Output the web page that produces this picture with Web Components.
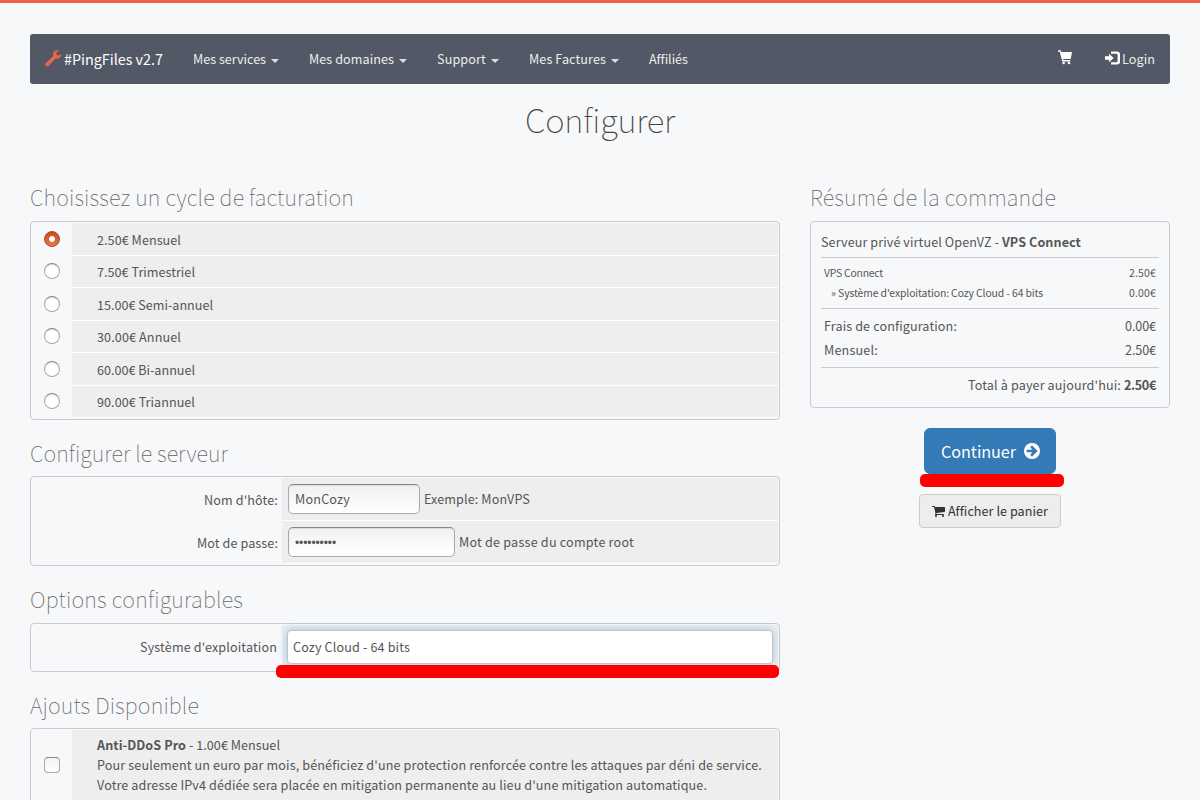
<!DOCTYPE html>
<html lang="fr">
<head>
<meta charset="utf-8">
<title>#PingFiles - Configurer</title>
<style>
html,body{margin:0;height:800px;overflow:hidden}
body{background:#f7f8fa;color:#555;font:12.6px/20px "Noto Sans CJK SC","Source Sans Pro",sans-serif}
</style>
</head>
<body>
<pf-app></pf-app>
<script>
const make = (name, html, setup) => customElements.define(name, class extends HTMLElement {
  connectedCallback() {
    if (this.shadowRoot) return;
    this.attachShadow({mode: 'open'}).innerHTML = html;
    if (setup) setup(this, this.shadowRoot);
  }
});

/* Single-line label whose tracking is adjusted to fill the width w */
make('pf-label', `<style>:host{display:inline-block;white-space:nowrap;vertical-align:top}</style><slot></slot>`, el => {
  const w = parseFloat(el.getAttribute('w'));
  const n = el.textContent.length;
  if (!w) return;
  const now = el.getBoundingClientRect().width;
  el.style.letterSpacing = ((w - now) / n).toFixed(3) + 'px';
  el.style.width = w + 'px';
});

const ICONS = {
  wrench: ['0 0 17 17', '<path d="M16.5 4.2 13.7 5.6 11.6 4.7 11.2 2.6 14 .7C11.6-.2 8.8.8 8.2 3.2 7.9 4.4 8.1 5.2 8.3 5.9L.9 12.900C-.1 13.900.1 15.200.8 15.900 1.600 16.700 2.900 16.800 3.800 15.800L10.400 8.600C12.800 9.500 16.200 7.800 16.500 4.200Z"/>'],
  cart: ['0 0 14 15', '<path d="M0 .2h2.500l.8 1.900H14l-1.300 7H5.100l.3 1h6.900v1.400H4.300L1.700 1.700H0Z"/><circle cx="5.600" cy="13" r="1.300"/><circle cx="11" cy="13" r="1.300"/>'],
  login: ['0 0 15 14', '<path d="M0 5.200h4V2.700L8.700 7 4 11.300V8.800H0Z"/><path d="M6 .5h6A3 3 0 0 1 15 3.500v7a3 3 0 0 1-3 3H6v-2.300h5.400q1.200 0 1.200-1.200V4q0-1.200-1.200-1.200H6Z"/>'],
  arrow: ['128 128 1536 1536', '<path d="M1413 896q0-27-18-45l-362-362-91-91q-18-18-45-18t-45 18l-91 91q-18 18-18 45t18 45l189 189h-502q-26 0-45 19t-19 45v128q0 26 19 45t45 19h502l-189 189q-19 19-19 45t19 45l91 91q18 18 45 18t45-18l91-91 362-362q18-18 18-45zm251 0q0 209-103 385.500t-279.500 279.500-385.500 103-385.500-103-279.500-279.500-103-385.500 103-385.500 279.500-279.500 385.500-103 385.500 103 279.500 279.500 103 385.500z"/>'],
  basket: ['64 256 1664 1408', '<path d="M704 1536q0 52-38 90t-90 38-90-38-38-90 38-90 90-38 90 38 38 90zm896 0q0 52-38 90t-90 38-90-38-38-90 38-90 90-38 90 38 38 90zm128-1088v512q0 24-16.500 42.500t-40.500 21.500l-1044 122q13 60 13 70 0 16-24 64h920q26 0 45 19t19 45-19 45-45 19h-1024q-26 0-45-19t-19-45q0-11 8-31.500t16-36 21.500-40 15.500-29.500l-177-823h-204q-26 0-45-19t-19-45 19-45 45-19h256q16 0 28.500 6.500t19.500 15.500 13 24.500 8 26 5.500 29.500 4.500 26h1201q26 0 45 19t19 45z"/>']
};
make('pf-icon', `<style>:host{display:block;flex:none}svg{display:block;width:100%;height:100%;fill:currentColor}</style><svg></svg>`, (el, root) => {
  const [box, body] = ICONS[el.getAttribute('name')];
  const svg = root.querySelector('svg');
  svg.setAttribute('viewBox', box);
  svg.innerHTML = body;
});

make('pf-nav-item', `<style>
:host{display:flex;align-items:center;height:20px;color:#eee}
i{width:0;height:0;margin-left:5px;margin-top:3px;border:4px solid transparent;border-top-color:#ddd;border-bottom:0}
:host([plain]) i{display:none}
</style><slot></slot><i></i>`);

make('pf-navbar', `<style>
:host{display:flex;box-sizing:border-box;height:50px;padding:0 15px;background:#535866;border-radius:3px;color:#eee;align-items:center}
.brand{display:flex;align-items:center;font-size:14.400px;color:#fff;margin-right:30px}
.brand pf-icon{width:17px;height:17px;color:#e8654a;margin:-2px 2px 0 0}
nav{display:flex;gap:30px;flex:1}
.cart{width:14px;height:15px;margin:-3px 33px 0 0;color:#fff}
.in{width:15px;height:14px;margin:-2px 2px 0 0;color:#fff}
</style>
<div class="brand"><pf-icon name="wrench"></pf-icon><pf-label w="99">#PingFiles v2.7</pf-label></div>
<nav>
<pf-nav-item><pf-label w="73">Mes services</pf-label></pf-nav-item>
<pf-nav-item><pf-label w="85">Mes domaines</pf-label></pf-nav-item>
<pf-nav-item><pf-label w="49">Support</pf-label></pf-nav-item>
<pf-nav-item><pf-label w="77">Mes Factures</pf-label></pf-nav-item>
<pf-nav-item plain><pf-label w="39">Affiliés</pf-label></pf-nav-item>
</nav>
<pf-icon class="cart" name="cart"></pf-icon><pf-icon class="in" name="login"></pf-icon><pf-label w="33">Login</pf-label>`);

make('pf-heading', `<style>
:host{display:block;height:30px;line-height:30px;font-size:21.700px;font-weight:100;color:#666}
:host([big]){font-size:33px;height:44px;line-height:44px;text-align:center;color:#444}
</style><slot></slot>`);

make('pf-panel', `<style>
:host{display:block;box-sizing:border-box;border:1px solid #c9cbce;border-radius:4px;padding:1px}
</style><slot></slot>`);

make('pf-choice', `<style>
:host{display:grid;grid-template-columns:40px 1fr;height:32px}
:host([tall]){height:33px}
.mark{display:flex;justify-content:center;padding-top:7px}
b{box-sizing:border-box;width:16px;height:16px;border-radius:50%;border:1px solid #aaa;border-top-color:#888;background:#fff;box-shadow:inset 0 1px 1px #ddd}
:host([on]) b{border:1px solid #b04a1c;background:radial-gradient(circle,#fff 0 2.500px,transparent 3.300px),linear-gradient(#c44c1a,#e67a4c);box-shadow:none}
.body{background:#eee;border-bottom:1px solid #fff;padding:6px 0 0 25px}
:host([tall]) .mark{padding-top:8px}
:host([tall]) .body{padding-top:7px}
</style><div class="mark"><b></b></div><div class="body"><slot></slot></div>`);

make('pf-addon', `<style>
:host{display:grid;grid-template-columns:40px 1fr;height:100px}
.mark{display:flex;justify-content:center;padding-top:27px}
i{box-sizing:border-box;width:16px;height:16px;border-radius:4px;border:1px solid #aaa;border-top-color:#888;background:linear-gradient(#f4f4f4,#fff)}
.body{background:#eee;padding:5px 0 0 25px;display:flex;flex-direction:column;align-items:flex-start}
</style><div class="mark"><i></i></div><div class="body"><slot></slot></div>`);

make('pf-field', `<style>
:host{display:grid;grid-template-columns:250px 1fr;height:43px}
.name{display:flex;justify-content:flex-end;padding:12px 4px 0 0}
.body{box-sizing:border-box;background:#eee;border-bottom:1px solid #fff;display:flex;padding:6px 0 0 6px}
:host([single]){height:45px}
:host([single]) .name{padding-right:5px}
:host([single]) .body{padding:5px 0 0 5px;border:0}
</style><div class="name"><slot name="name"></slot></div><div class="body"><slot></slot></div>`);

make('pf-input', `<style>
:host{display:block;box-sizing:border-box;height:30px;margin-right:4px;padding:4px 6px;border:1px solid #aaa;border-top-color:#888;border-radius:5px;background:linear-gradient(#f1f1f1,#fff);box-shadow:inset 0 1px 1px #ddd}
:host([secret]){font-family:"Liberation Sans",sans-serif;font-size:12px;padding-top:5px}
:host([focus]){height:34px;width:486px;padding:6px 5px;border-color:#bbc4cc;border-radius:4px;background:#fff;box-shadow:0 0 8px rgba(102,165,215,.6)}
</style><slot></slot>`);

make('pf-line', `<style>
:host{display:flex;justify-content:space-between;padding:0 3px;height:20px}
</style><slot></slot>`);

make('pf-summary', `<style>
:host{display:block}
pf-panel{height:187px;padding:10px 10px 0}
section{border-bottom:1px solid #c9cbce;box-sizing:border-box}
.title{height:26px}
.title b{margin-left:3px}
.items{height:51px;padding-top:5px;font-size:10.400px}
.items pf-line+pf-line{padding-left:10px}
.fees{height:59px;padding-top:7px}
.fees pf-line{height:24px}
.total{display:flex;justify-content:flex-end;gap:3px;padding:7px 3px 0 0}
</style>
<pf-panel>
<section class="title"><pf-label w="178">Serveur privé virtuel OpenVZ -</pf-label><b><pf-label w="79">VPS Connect</pf-label></b></section>
<section class="items">
<pf-line><pf-label w="59">VPS Connect</pf-label><pf-label w="27">2.50€</pf-label></pf-line>
<pf-line><pf-label w="212">» Système d'exploitation: Cozy Cloud - 64 bits</pf-label><pf-label w="27">0.00€</pf-label></pf-line>
</section>
<section class="fees">
<pf-line><pf-label w="133">Frais de configuration:</pf-label><pf-label w="31">0.00€</pf-label></pf-line>
<pf-line><pf-label w="54">Mensuel:</pf-label><pf-label w="31">2.50€</pf-label></pf-line>
</section>
<div class="total"><pf-label w="153">Total à payer aujourd'hui:</pf-label><b><pf-label w="32">2.50€</pf-label></b></div>
</pf-panel>`);

make('pf-button', `<style>
:host{display:flex;box-sizing:border-box;width:142px;height:34px;align-items:center;padding-left:12px;gap:3px;border:1px solid #ccc;border-radius:4px;background:#ededed;color:#333}
:host([primary]){width:132px;height:46px;padding-left:16px;gap:8px;border-color:#337ab7;border-radius:6px;background:#337ab7;color:#fff;font-size:16.200px}
</style><slot></slot>`);

make('pf-marker', `<style>
:host{position:absolute;height:13px;border-radius:5px;background:#f00;z-index:2}
</style>`);

make('pf-app', `<style>
:host{display:block;box-sizing:border-box;height:800px;overflow:hidden;border-top:3px solid #e8654a;padding:31px 30px 0}
.title{margin-top:13px}
main{display:grid;grid-template-columns:750px 360px;column-gap:30px;margin-top:41px}
pf-heading{margin-bottom:8px}
.first{margin-bottom:9px}
.gap1{margin-top:18px}.gap2{margin-top:18px;margin-bottom:9px}.gap3{margin-top:18px}
.wrap{position:relative}
.wrap pf-marker{left:246px;top:42px;width:503px}
.actions{display:flex;flex-direction:column;align-items:center;gap:20px;margin-top:20px;position:relative}
.actions pf-marker{left:110px;top:46px;width:144px}
.arrow{width:16px;height:16px}.basket{width:13px;height:11px}
</style>
<pf-navbar></pf-navbar>
<pf-heading class="title" big><pf-label w="150">Configurer</pf-label></pf-heading>
<main>
<div>
<pf-heading class="first"><pf-label w="324">Choisissez un cycle de facturation</pf-label></pf-heading>
<pf-panel>
<pf-choice tall on><pf-label w="84">2.50€ Mensuel</pf-label></pf-choice>
<pf-choice><pf-label w="98">7.50€ Trimestriel</pf-label></pf-choice>
<pf-choice tall><pf-label w="116">15.00€ Semi-annuel</pf-label></pf-choice>
<pf-choice><pf-label w="84">30.00€ Annuel</pf-label></pf-choice>
<pf-choice tall><pf-label w="98">60.00€ Bi-annuel</pf-label></pf-choice>
<pf-choice><pf-label w="98">90.00€ Triannuel</pf-label></pf-choice>
</pf-panel>
<pf-heading class="gap1"><pf-label w="198">Configurer le serveur</pf-label></pf-heading>
<pf-panel>
<pf-field><pf-label slot="name" w="74">Nom d'hôte:</pf-label><pf-input style="width:132px"><pf-label w="55">MonCozy</pf-label></pf-input><pf-label style="margin-top:5px" w="106">Exemple: MonVPS</pf-label></pf-field>
<pf-field><pf-label slot="name" w="81">Mot de passe:</pf-label><pf-input secret style="width:167px"><pf-label w="41">••••••••••</pf-label></pf-input><pf-label style="margin-top:5px" w="175">Mot de passe du compte root</pf-label></pf-field>
</pf-panel>
<pf-heading class="gap2"><pf-label w="213">Options configurables</pf-label></pf-heading>
<div class="wrap">
<pf-panel><pf-field single><pf-label slot="name" w="137">Système d'exploitation</pf-label><pf-input focus><pf-label w="117">Cozy Cloud - 64 bits</pf-label></pf-input></pf-field></pf-panel>
<pf-marker></pf-marker>
</div>
<pf-heading class="gap3"><pf-label w="169">Ajouts Disponible</pf-label></pf-heading>
<pf-panel>
<pf-addon><div><b><pf-label w="89">Anti-DDoS Pro</pf-label></b><pf-label style="margin-left:3px" w="91">- 1.00€ Mensuel</pf-label></div>
<pf-label w="665">Pour seulement un euro par mois, bénéficiez d'une protection renforcée contre les attaques par déni de service.</pf-label>
<pf-label w="610">Votre adresse IPv4 dédiée sera placée en mitigation permanente au lieu d'une mitigation automatique.</pf-label></pf-addon>
</pf-panel>
</div>
<aside>
<pf-heading class="first"><pf-label w="246">Résumé de la commande</pf-label></pf-heading>
<pf-summary></pf-summary>
<div class="actions">
<pf-button primary><pf-label w="75">Continuer</pf-label><pf-icon class="arrow" name="arrow"></pf-icon></pf-button>
<pf-marker></pf-marker>
<pf-button><pf-icon class="basket" name="basket"></pf-icon><pf-label w="100">Afficher le panier</pf-label></pf-button>
</div>
</aside>
</main>`);
</script>
</body>
</html>
